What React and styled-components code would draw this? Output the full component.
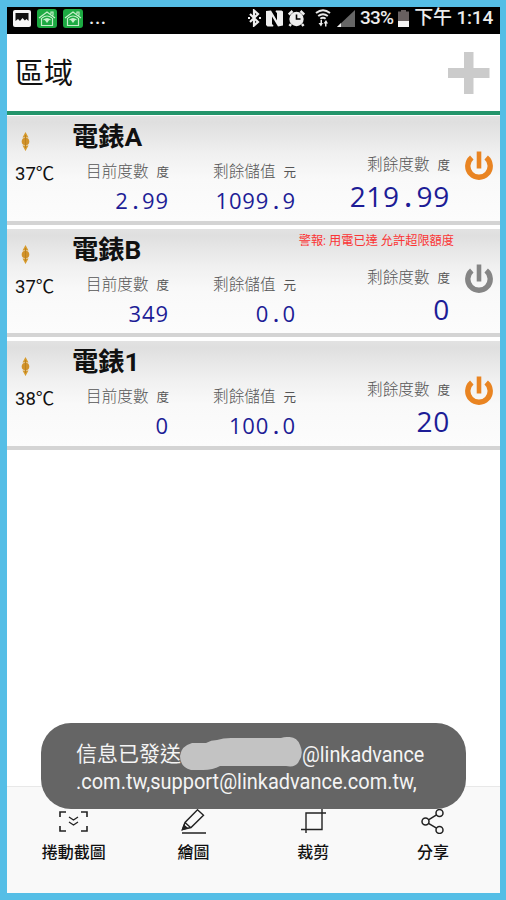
import React from 'react';
import styled, { createGlobalStyle } from 'styled-components';

const GlobalStyle = createGlobalStyle`
  * {
    box-sizing: border-box;
  }

  body {
    margin: 0;
    font-family: Roboto, 'Noto Sans CJK TC', sans-serif;
    color: #111;
  }
`;

const Screen = styled.div`
  position: relative;
  display: flex;
  flex-direction: column;
  width: 506px;
  height: 900px;
  border: solid #55bee6;
  border-width: 7px 6px 7px 7px;
  background: #fff;
  overflow: hidden;
`;

const StatusBar = styled.div`
  flex: none;
  display: flex;
  justify-content: space-between;
  height: 27px;
  padding: 0 7px 5px 6px;
  background: #000;
  color: #ececec;
`;

const StatusGroup = styled.div`
  display: flex;
  align-items: center;
  gap: ${props => props.$gap}px;

  svg {
    flex: none;
    display: block;
  }
`;

const StatusText = styled.span`
  font-size: 19px;
  line-height: 22px;
  font-weight: 500;
  letter-spacing: ${props => props.$spacing || 0}px;
  white-space: nowrap;
`;

const Header = styled.header`
  flex: none;
  display: flex;
  align-items: center;
  justify-content: space-between;
  height: 81px;
  padding: 0 10px 1px 8px;
  border-bottom: 4px solid #24956b;
`;

const PageTitle = styled.h1`
  margin: 0;
  padding-top: 3px;
  font-size: 29px;
  line-height: 40px;
  font-weight: 400;
`;

const MeterList = styled.div`
  display: flex;
  flex-direction: column;
  gap: 4px;
  padding-top: 1px;
`;

const MeterRow = styled.div`
  flex: none;
  display: flex;
  height: 108.5px;
  padding-top: 2px;
  border-bottom: 4px solid #d4d4d4;
  background: linear-gradient(#e2e2e2, #dfdfdf 6%, #f0f0f0 36%, #f9f9f9 60%, #fcfcfc);
`;

const TempColumn = styled.div`
  width: 55px;
  padding: 14px 0 0 8px;

  svg {
    display: block;
    margin-left: 6px;
  }
`;

const Temp = styled.div`
  margin-top: 12px;
  font-size: 18.5px;
  line-height: 22px;
  white-space: nowrap;
`;

const MeterMain = styled.div`
  width: 234px;
  padding-left: 10px;
`;

const MeterName = styled.h2`
  margin: 0;
  padding-top: 1px;
  font-size: 26.3px;
  line-height: 36px;
  font-weight: 700;
`;

const Readings = styled.div`
  display: flex;
  padding-top: 6px;
`;

const Reading = styled.div`
  width: ${props => props.$width}px;
  text-align: right;
`;

const Label = styled.div`
  font-size: 15.6px;
  line-height: 22px;
  font-weight: 300;
  color: #555;
  white-space: nowrap;
`;

const Unit = styled.span`
  margin-left: 8px;
  font-size: 12.5px;
  font-weight: 400;
`;

const Digits = styled.div`
  font-family: 'Open Sans', 'Noto Sans', sans-serif;
  font-size: ${props => (props.$large ? 28 : 22)}px;
  line-height: ${props => (props.$large ? 38 : 30)}px;
  margin-top: ${props => (props.$large ? 0 : 1)}px;
  letter-spacing: ${props => (props.$large ? 0.7 : 0.9)}px;
  color: #1d1d96;
`;

/* the point takes a full digit cell */
const Point = styled.span`
  display: inline-block;
  width: 0.6em;
  text-align: center;
  letter-spacing: 0;
  font-weight: 600;
`;

const Balance = styled.div`
  width: 154px;
  text-align: right;
`;

const Alert = styled.div`
  height: 36px;
  margin-right: -4px;
  padding-top: 2px;
  font-size: 12.2px;
  line-height: 16px;
  color: #fb3535;
  white-space: nowrap;
`;

const PowerButton = styled.button`
  width: 50px;
  padding: 33px 0 0 15px;
  border: 0;
  background: none;
  text-align: left;
  align-self: flex-start;

  svg {
    display: block;
  }
`;

const Toolbar = styled.nav`
  display: flex;
  height: 107px;
  margin-top: auto;
  padding: 22px 7px 0;
  border-top: 1px solid #e8e8e8;
  background: #f9f9f9;
`;

const ToolItem = styled.div`
  flex: 1;
  display: flex;
  flex-direction: column;
  align-items: center;
  gap: 6px;
  font-size: 16px;
  line-height: 25px;
  font-weight: 500;
`;

const Toast = styled.div`
  position: absolute;
  left: 34px;
  top: 716px;
  width: 425px;
  height: 86px;
  padding: 18px 0 0 35px;
  border-radius: 30px;
  background: #656565;
  color: #f4f4f4;
  font-size: 21px;
  line-height: 27px;
`;

const ToastLine = styled.div`
  display: flex;
  align-items: center;
  height: 27px;
  white-space: nowrap;

  svg {
    flex: none;
    margin: 0 -1px 0 -4px;
  }
`;

const Narrow = styled.span`
  display: inline-block;
  font-size: 22.5px;
  transform: scaleX(${props => props.$scale});
  transform-origin: 0 50%;
`;

const PictureIcon = () => (
  <svg width="18" height="17" viewBox="0 0 18 17">
    <rect width="18" height="17" rx="2" fill="#f5f5f5" />
    <path d="M2.5 3h13v8l-2-2-1.6 1.5L9.5 8 7 11 5 9l-2.5 2z" fill="#111" />
  </svg>
);

const HomeIcon = () => (
  <svg width="20" height="19" viewBox="0 0 20 19">
    <rect width="20" height="19" rx="3" fill="#1cab42" />
    <g fill="none" stroke="#c5efca" strokeWidth="1.2">
      <path d="M2 9l8-6 8 6M4.5 9v7.5h11V9M14 5V3h2v3.5" />
      <path d="M5 9q5-4 10 0M6.5 11q3.500-3 7 0" />
    </g>
    <path d="M7 10h6l-3 4z" fill="#c5efca" />
  </svg>
);

const BluetoothIcon = () => (
  <svg width="13" height="18" viewBox="0 0 13 18" fill="none" stroke="#eee" strokeWidth="2.2">
    <path d="M2 5l8 8-4 3.500v-15L10 5l-8 8" />
    <path d="M0 9h2M11 9h2" />
  </svg>
);

const NfcIcon = () => (
  <svg width="17" height="17" viewBox="0 0 17 17">
    <path d="M0 1l5-.5 6 10V3L9.500 1.500 10 .5h5.500l1.500 1v14l-5 1-6-10V14l1.500 1.500-.5 1H1.500L0 15z" fill="#eee" />
  </svg>
);

const AlarmIcon = () => (
  <svg width="17" height="17" viewBox="0 0 17 17">
    <circle cx="8.500" cy="9" r="7.200" fill="#eee" />
    <path d="M.8 4.500L4.500 1M12.500 1l3.700 3.500M3 14l-1.500 2M14 14l1.500 2" stroke="#eee" strokeWidth="2.500" />
    <path d="M8.500 4.500V9h4" fill="none" stroke="#000" strokeWidth="1.600" />
  </svg>
);

const WifiIcon = () => (
  <svg width="22" height="18" viewBox="-5 0 22 18">
    <g fill="none" stroke="#e8e8e8" strokeWidth="2">
      <path d="M1 4q7-5.500 14 0M3.200 7q4.800-3.500 9.600 0M5.400 9.800q2.600-2 5.200 0" />
    </g>
    <path d="M5.500 11v3H3.500L6 17.500l2-3.500H7v-3zM10 17.500v-3H8.500L11 11l2 3.500h-1.500v3z" fill="#eee" />
  </svg>
);

const SignalIcon = () => (
  <svg width="18" height="17" viewBox="0 0 18 17">
    <path d="M18 0v17H0z" fill="#666" />
    <path d="M4 13v4H0z" fill="#eee" />
  </svg>
);

const BatteryIcon = () => (
  <svg width="11" height="17" viewBox="0 0 11 17">
    <path d="M3 0h5v1.500h3V11H0V1.500h3z" fill="#686060" />
    <path d="M0 11h11v6H0z" fill="#f4f4f4" />
  </svg>
);

const PlusIcon = () => (
  <svg width="43" height="43" viewBox="0 0 43 43">
    <path d="M17 1h9.500v16h16v10h-16v16H17V27H1V17h16z" fill="#cbcbcb" />
  </svg>
);

const SortIcon = () => (
  <svg width="9" height="19" viewBox="0 0 9 19">
    <path d="M4.500 0L7.500 5.500h-6zM4.500 19L7.500 13.500h-6z" fill="#d69a2c" />
    <circle cx="4.500" cy="9.500" r="3.800" fill="#d1922a" />
    <path d="M4.500 3v13" stroke="#bd8320" strokeWidth="1" />
  </svg>
);

const PowerIcon = ({ on }) => (
  <svg width="28" height="30" viewBox="0 0 28 30" fill="none" stroke={on ? '#e98422' : '#858585'}>
    <path d="M6.800 6.500a11.200 11.200 0 1 0 14.400 0" strokeWidth="5.400" />
    <path d="M14 .5v17" strokeWidth="4.600" />
  </svg>
);

const ScrollShotIcon = () => (
  <svg width="29" height="25" viewBox="0 0 29 25" fill="none" stroke="#222" strokeWidth="1.600">
    <path d="M7 3H1v5M22 3h6v5M7 22H1v-5M22 22h6v-5" />
    <path d="M10 8l4.500 3L19 8M10 13l4.500 3 4.500-3" strokeWidth="1.300" />
  </svg>
);

const DrawIcon = () => (
  <svg width="25" height="25" viewBox="0 0 25 25" fill="none" stroke="#222" strokeWidth="1.400">
    <path d="M1.500 20.500L4 13.500 16.500.8l6 5.500L10 18.500zM4 13.500l5.500 5M1 24h24" />
    <path d="M1.500 20.500l1.500-4 3 2.500z" fill="#222" />
  </svg>
);

const CropIcon = () => (
  <svg width="25" height="25" viewBox="0 0 25 25" fill="none" stroke="#222" strokeWidth="1.400">
    <path d="M5 24V4h20M0 20.500h21V0" />
  </svg>
);

const ShareIcon = () => (
  <svg width="24" height="25" viewBox="0 0 24 25" fill="none" stroke="#222" strokeWidth="1.500">
    <circle cx="4.500" cy="12.500" r="3.500" />
    <circle cx="18.500" cy="4" r="3.500" />
    <circle cx="18.500" cy="21" r="3.500" />
    <path d="M7.500 10.800l8-5M7.500 14.300l8 4.900" />
  </svg>
);

const Redaction = () => (
  <svg width="126" height="36" viewBox="0 0 126 36">
    <path
      d="M3 19Q4 9 15 6h14q5-3 11-3Q46 1 54 1h50q15-4 19 7 4 9-1 16-3 7-13 5H43q-7 4-17 4H14Q3 30 3 19z"
      fill="#c3c3c3"
    />
  </svg>
);

const Value = ({ value, large }) => {
  const [whole, fraction] = value.split('.');
  return (
    <Digits $large={large}>
      {whole}
      {fraction && <Point>.</Point>}
      {fraction}
    </Digits>
  );
};

const meters = [
  { name: '電錶A', temp: '37℃', used: '2.99', credit: '1099.9', left: '219.99', on: true },
  { name: '電錶B', temp: '37℃', used: '349', credit: '0.0', left: '0', on: false, alert: '警報: 用電已達 允許超限額度' },
  { name: '電錶1', temp: '38℃', used: '0', credit: '100.0', left: '20', on: true },
];

const tools = [
  { label: '捲動截圖', Icon: ScrollShotIcon },
  { label: '繪圖', Icon: DrawIcon },
  { label: '裁剪', Icon: CropIcon },
  { label: '分享', Icon: ShareIcon },
];

const Meter = ({ meter }) => (
  <MeterRow>
    <TempColumn>
      <SortIcon />
      <Temp>{meter.temp}</Temp>
    </TempColumn>
    <MeterMain>
      <MeterName>{meter.name}</MeterName>
      <Readings>
        <Reading $width={97}>
          <Label>目前度數<Unit>度</Unit></Label>
          <Value value={meter.used} />
        </Reading>
        <Reading $width={127}>
          <Label>剩餘儲值<Unit>元</Unit></Label>
          <Value value={meter.credit} />
        </Reading>
      </Readings>
    </MeterMain>
    <Balance>
      <Alert>{meter.alert}</Alert>
      <Label>剩餘度數<Unit>度</Unit></Label>
      <Value value={meter.left} large />
    </Balance>
    <PowerButton>
      <PowerIcon on={meter.on} />
    </PowerButton>
  </MeterRow>
);

const App = () => (
  <Screen>
    <GlobalStyle />
    <StatusBar>
      <StatusGroup $gap={6}>
        <PictureIcon />
        <HomeIcon />
        <HomeIcon />
        <StatusText $spacing={0.6}>...</StatusText>
      </StatusGroup>
      <StatusGroup $gap={5}>
        <BluetoothIcon />
        <NfcIcon />
        <AlarmIcon />
        <WifiIcon />
        <SignalIcon />
        <StatusText $spacing={-0.8}>33%</StatusText>
        <BatteryIcon />
        <StatusText $spacing={-0.2}>下午 1:14</StatusText>
      </StatusGroup>
    </StatusBar>

    <Header>
      <PageTitle>區域</PageTitle>
      <PlusIcon />
    </Header>

    <MeterList>
      {meters.map(meter => (
        <Meter key={meter.name} meter={meter} />
      ))}
    </MeterList>

    <Toolbar>
      {tools.map(({ label, Icon }) => (
        <ToolItem key={label}>
          <Icon />
          {label}
        </ToolItem>
      ))}
    </Toolbar>

    <Toast>
      <ToastLine>
        信息已發送
        <Redaction />
        <Narrow $scale={0.88}>@linkadvance</Narrow>
      </ToastLine>
      <ToastLine>
        <Narrow $scale={0.888}>.com.tw,support@linkadvance.com.tw,</Narrow>
      </ToastLine>
    </Toast>
  </Screen>
);

export default App;
